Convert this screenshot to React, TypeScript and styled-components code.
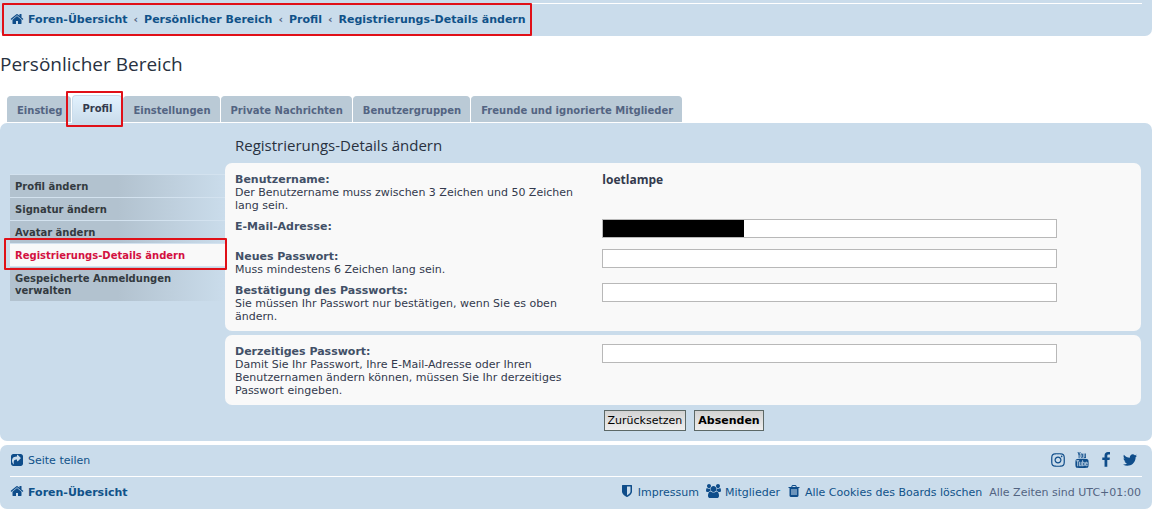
import React from 'react';
import styled, { createGlobalStyle } from 'styled-components';
import { TfiYoutube } from 'react-icons/tfi';

const GlobalStyle = createGlobalStyle`
  * { box-sizing: border-box; }
  body {
    margin: 0;
    background: #fff;
    color: #333a4d;
    font-family: "DejaVu Sans", Verdana, sans-serif;
    font-size: 11px;
    line-height: 13px;
  }
  ul { list-style: none; margin: 0; padding: 0; }
`;

const headingFont = '"Open Sans", sans-serif';

const Page = styled.div`
  margin-right: 5px;
`;

const Marker = styled.span<{ $inset: string }>`
  position: absolute;
  inset: ${(p) => p.$inset};
  border: 2px solid #e01018;
  border-radius: 1px;
  pointer-events: none;
  z-index: 2;
`;

const HeaderBar = styled.nav`
  height: 36px;
  padding: 3px 10px 0;
  background: #cadceb;
  border-radius: 0 0 7px 7px;
`;

const HeaderLine = styled.div`
  display: flex;
  align-items: center;
  height: 32px;
  border-top: 1px solid #fff;
`;

const Crumbs = styled.ol`
  position: relative;
  display: flex;
  align-items: center;
  margin: 0;
  padding: 0;
  list-style: none;
  font-weight: bold;
  color: #536482;
`;

const Crumb = styled.li`
  display: flex;
  align-items: center;
  & + &::before {
    content: "‹";
    padding: 0 6px;
  }
`;

const IconLink = styled.a<{ $bold?: boolean }>`
  display: inline-flex;
  align-items: center;
  gap: 4px;
  color: #105289;
  font-weight: ${(p) => (p.$bold ? 'bold' : 'normal')};
  text-decoration: none;
  white-space: nowrap;
`;

const Glyph = styled.svg`
  flex: none;
  display: block;
  margin-bottom: 2px;
  fill: #0f4d8a;
  fill-rule: evenodd;
`;

const PageTitle = styled.h1`
  margin: 16px 0 20px;
  font: 400 19px/24px ${headingFont};
  color: #28313f;
`;

const Tabs = styled.ul`
  display: flex;
  align-items: flex-end;
  gap: 1px;
  height: 27px;
  padding-left: 7px;
`;

const TabItem = styled.li<{ $active?: boolean }>`
  position: relative;
  height: ${(p) => (p.$active ? 28 : 27)}px;
  padding-bottom: ${(p) => (p.$active ? 0 : 1)}px;
`;

const TabLink = styled.a<{ $active?: boolean }>`
  display: flex;
  align-items: center;
  height: 100%;
  padding: ${(p) => (p.$active ? '0 9px 2px' : '1px 8px 0 9px')};
  border: 1px solid ${(p) => (p.$active ? '#cadceb' : '#bacad6')};
  border-bottom: 0;
  border-radius: 4px 4px 0 0;
  background: ${(p) => (p.$active ? 'linear-gradient(#e2f2fe, #cadceb)' : '#bacad6')};
  color: ${(p) => (p.$active ? '#333a4d' : '#536482')};
  font-size: 10px;
  font-weight: bold;
  text-decoration: none;
  white-space: nowrap;
`;

const Panel = styled.main`
  display: flex;
  padding: 10px 11px 10px 10px;
  background: #cadceb;
  border-radius: 7px;
`;

const Side = styled.nav`
  flex: none;
  width: 215px;
  padding-top: 41px;
`;

const SideItem = styled.li`
  position: relative;
`;

const SideLink = styled.a<{ $active?: boolean }>`
  display: block;
  margin-top: 1px;
  padding: 6px 5px 4px;
  background: ${(p) => (p.$active ? '#f9f9f9' : 'linear-gradient(to right, #b2c2cf 50%, #cadceb)')};
  box-shadow: 0 -1px 0 #d3e2ef;
  color: ${(p) => (p.$active ? '#d31141' : '#333a40')};
  font-size: 10px;
  font-weight: bold;
  line-height: 12px;
  text-decoration: none;
`;

const SettingsForm = styled.form`
  flex: 1;
  min-width: 0;
`;

const FormTitle = styled.h2`
  margin: 2px 10px 8px;
  font: 400 15px/20px ${headingFont};
  color: #28313f;
`;

const Card = styled.div`
  margin-bottom: 4px;
  padding: 5px 10px;
  background: #f9f9f9;
  border-radius: 7px;
`;

const Field = styled.div`
  display: grid;
  grid-template-columns: 40% 59%;
  column-gap: 1%;
  align-items: start;
  min-height: 30px;
  padding: 4px 0 3px;
`;

const FieldText = styled.div`
  padding-top: 1px;
`;

const Label = styled.label`
  display: block;
  color: #425067;
  font-weight: bold;
`;

const Control = styled.div`
  position: relative;
`;

const TextBox = styled.input`
  display: block;
  width: 86%;
  height: 19px;
  padding: 2px;
  border: 1px solid #b8b8b8;
  border-radius: 0;
  background: #fff;
  font: inherit;
`;

const Redaction = styled.span`
  position: absolute;
  top: 1px;
  left: 1px;
  width: 141px;
  height: 17px;
  background: #000;
`;

const UserName = styled.strong`
  display: block;
  color: #333a4d;
  font: 700 12px/13px "Open Sans", sans-serif;
`;

const Actions = styled.div`
  display: flex;
  gap: 8px;
  padding-left: calc(41% + 3px);
  padding-top: 1px;
`;

const Button = styled.button<{ $primary?: boolean }>`
  height: 21px;
  padding: 0 3px;
  border: 1px solid #5c6866;
  border-radius: 0;
  background: linear-gradient(#d2d2d2, #efefef);
  color: #000;
  font: inherit;
  font-weight: ${(p) => (p.$primary ? 'bold' : 'normal')};
`;

const Footer = styled.footer`
  margin-top: 4px;
  padding: 0 10px 2px;
  background: #cadceb;
  border-radius: 7px;
`;

const FooterRow = styled.div`
  display: flex;
  align-items: center;
  justify-content: space-between;
  height: 31px;
  & + & { border-top: 1px solid #fff; }
`;

const FooterLinks = styled.div<{ $gap: number; $end: number }>`
  display: flex;
  align-items: center;
  gap: ${(p) => p.$gap}px;
  padding-right: ${(p) => p.$end}px;
  color: #536482;
`;

const paths = {
  home: 'M1472 992v480q0 26-19 45t-45 19h-384v-384h-256v384h-384q-26 0-45-19t-19-45v-480q0-1 .5-3t.5-3l575-474 575 474q1 2 1 6zm223-69l-62 74q-8 9-21 11h-3q-13 0-21-7l-692-577-692 577q-12 8-24 7-13-2-21-11l-62-74q-8-10-7-23.5t11-21.5l719-599q32-26 76-26t76 26l244 204v-195q0-14 9-23t23-9h192q14 0 23 9t9 23v408l219 182q10 8 11 21.5t-7 23.5z',
  share: 'M1005 1045l352-352q19-19 19-45t-19-45l-352-352q-30-31-69-14-40 17-40 59v160q-119 0-216 19.5t-162.5 51-114 79-76.5 95.5-44.5 109-21.5 111.5-5 110.5q0 181 167 404 11 12 25 12 7 0 13-3 22-9 19-33-44-354 62-473 46-52 130-75.5t224-23.5v160q0 42 40 59 12 5 24 5 26 0 45-19zM1664 416v960q0 119-84.5 203.5t-203.5 84.5h-960q-119 0-203.5-84.5t-84.5-203.5v-960q0-119 84.5-203.5t203.5-84.5h960q119 0 203.5 84.5t84.5 203.5z',
  shield: 'M1344 960v-640h-448v1137q119-63 213-137 235-184 235-360zm192-768v768q0 86-33.5 170.5t-83 150-118 127.5-126.5 103-121 77.5-89.5 49.5-42.5 20q-12 6-26 6t-26-6q-16-7-42.5-20t-89.5-49.5-121-77.5-126.5-103-118-127.5-83-150-33.5-170.5v-768q0-26 19-45t45-19h1152q26 0 45 19t19 45z',
  users: 'M593 896q-162 5-265 128H194q-82 0-138-40.5T0 865q0-353 124-353 6 0 43.5 21t97.5 42.5T384 597q67 0 133-23-5 37-5 66 0 143 81 256zm1071 637q0 120-73 189.5t-194 69.5H523q-121 0-194-69.5T256 1533q0-53 3.5-103.5t14-109T300 1212t43-97.5 62-81 85.5-53.5T602 960q10 0 43 21.5t73 48 107 48 135 21.5 135-21.5 107-48 73-48 43-21.5q61 0 111.5 20t85.5 53.5 62 81 43 97.5 26.5 108.5 14 109 3.5 103.5zM640 256q0 106-75 181t-181 75-181-75-75-181 75-181T384 0t181 75 75 181zm704 384q0 159-112.5 271.5T960 1024 688.5 911.5 576 640t112.5-271.5T960 256t271.5 112.5T1344 640zm576 225q0 78-56 118.5t-138 40.5h-134q-103-123-265-128 81-113 81-256 0-29-5-66 66 23 133 23 59 0 119-21.5t97.5-42.5 43.5-21q124 0 124 353zm-128-609q0 106-75 181t-181 75-181-75-75-181 75-181 181-75 181 75 75 181z',
  trash: 'M704 1376v-704q0-14-9-23t-23-9h-64q-14 0-23 9t-9 23v704q0 14 9 23t23 9h64q14 0 23-9t9-23zm256 0v-704q0-14-9-23t-23-9h-64q-14 0-23 9t-9 23v704q0 14 9 23t23 9h64q14 0 23-9t9-23zm256 0v-704q0-14-9-23t-23-9h-64q-14 0-23 9t-9 23v704q0 14 9 23t23 9h64q14 0 23-9t9-23zm-544-992h448l-48-117q-7-9-17-11h-317q-10 2-17 11zm928 32v64q0 14-9 23t-23 9h-96v948q0 83-47 143.5t-113 60.5h-832q-66 0-113-58.5t-47-141.5v-952h-96q-14 0-23-9t-9-23v-64q0-14 9-23t23-9h309l70-167q15-37 54-63t79-26h320q40 0 79 26t54 63l70 167h309q14 0 23 9t9 23z',
  instagram: 'M1152 896q0-106-75-181t-181-75-181 75-75 181 75 181 181 75 181-75 75-181zm138 0q0 164-115 279t-279 115-279-115-115-279 115-279 279-115 279 115 115 279zm108-410q0 38-27 65t-65 27-65-27-27-65 27-65 65-27 65 27 27 65zm-502-220q-7 0-76.5-.5t-105.5 0-96.5 3-103 10-71.5 18.5q-50 20-88 58t-58 88q-11 29-18.5 71.5t-10 103-3 96.5 0 105.5.5 76.5-.5 76.5 0 105.5 3 96.5 10 103 18.5 71.5q20 50 58 88t88 58q29 11 71.5 18.5t103 10 96.5 3 105.5 0 76.5-.5 76.5.5 105.5 0 96.5-3 103-10 71.5-18.5q50-20 88-58t58-88q11-29 18.5-71.5t10-103 3-96.5 0-105.5-.5-76.5.5-76.5 0-105.5-3-96.5-10-103-18.5-71.5q-20-50-58-88t-88-58q-29-11-71.5-18.5t-103-10-96.5-3-105.5 0-76.5.5zm768 630q0 229-5 317-10 208-124 322t-322 124q-88 5-317 5t-317-5q-208-10-322-124t-124-322q-5-88-5-317t5-317q10-208 124-322t322-124q88-5 317-5t317 5q208 10 322 124t124 322q5 88 5 317z',
  facebook: 'M1343 12v264h-157q-86 0-116 36t-30 108v189h293l-39 296h-254v759h-306v-759h-255v-296h255v-218q0-186 104-288.5t277-102.5q147 0 228 12z',
  twitter: 'M1684 408q-67 98-162 167 1 14 1 42 0 130-38 259.5t-115.5 248.5-184.5 210.5-258 146-323 54.5q-271 0-496-145 35 4 78 4 225 0 401-138-105-2-188-64.5t-114-159.5q33 5 61 5 43 0 85-11-112-23-185.5-111.5t-73.5-205.5v-4q68 38 146 41-66-44-105-115t-39-154q0-88 44-163 121 149 294.5 238.5t371.5 99.5q-8-38-8-74 0-134 94.5-228.5t228.5-94.5q140 0 236 102 109-21 205-78-37 115-142 178 93-10 186-50z',
};

function Icon({ name, size = 14 }: { name: keyof typeof paths; size?: number }) {
  const box = name === 'users' ? '0 0 1920 1792' : '0 0 1792 1792';
  const width = name === 'users' ? size + 1 : size;
  return (
    <Glyph viewBox={box} width={width} height={size} aria-hidden="true">
      <path d={paths[name]} />
    </Glyph>
  );
}

const tabs = ['Einstieg', 'Profil', 'Einstellungen', 'Private Nachrichten', 'Benutzergruppen', 'Freunde und ignorierte Mitglieder'];

const sideLinks = [
  'Profil ändern',
  'Signatur ändern',
  'Avatar ändern',
  'Registrierungs-Details ändern',
  'Gespeicherte Anmeldungen verwalten',
];

function PasswordField({ id, label, hint }: { id: string; label: string; hint: string }) {
  return (
    <Field>
      <FieldText>
        <Label htmlFor={id}>{label}</Label>
        {hint}
      </FieldText>
      <Control>
        <TextBox id={id} type="password" />
      </Control>
    </Field>
  );
}

export default function App() {
  return (
    <Page>
      <GlobalStyle />
      <HeaderBar>
        <HeaderLine>
          <Crumbs>
            <Crumb>
              <IconLink href="#" $bold>
                <Icon name="home" />
                Foren-Übersicht
              </IconLink>
            </Crumb>
            {['Persönlicher Bereich', 'Profil', 'Registrierungs-Details ändern'].map((c) => (
              <Crumb key={c}>
                <IconLink href="#" $bold>{c}</IconLink>
              </Crumb>
            ))}
            <Marker $inset="-9px -6px -8px -8px" />
          </Crumbs>
        </HeaderLine>
      </HeaderBar>

      <PageTitle>Persönlicher Bereich</PageTitle>

      <Tabs>
        {tabs.map((t) => {
          const active = t === 'Profil';
          return (
            <TabItem key={t} $active={active}>
              <TabLink href="#" $active={active}>{t}</TabLink>
              {active && <Marker $inset="-4px -1px -4px -6px" />}
            </TabItem>
          );
        })}
      </Tabs>

      <Panel>
        <Side>
          <ul>
            {sideLinks.map((s) => {
              const active = s === 'Registrierungs-Details ändern';
              return (
                <SideItem key={s}>
                  <SideLink href="#" $active={active}>{s}</SideLink>
                  {active && <Marker $inset="-6px -2px -4px -6px" />}
                </SideItem>
              );
            })}
          </ul>
        </Side>

        <SettingsForm onSubmit={(e) => e.preventDefault()}>
          <FormTitle>Registrierungs-Details ändern</FormTitle>
          <Card>
            <Field>
              <FieldText>
                <Label as="span">Benutzername:</Label>
                Der Benutzername muss zwischen 3 Zeichen und 50 Zeichen lang sein.
              </FieldText>
              <FieldText>
                <UserName>loetlampe</UserName>
              </FieldText>
            </Field>
            <Field>
              <FieldText>
                <Label htmlFor="email">E-Mail-Adresse:</Label>
              </FieldText>
              <Control>
                <TextBox id="email" type="email" />
                <Redaction />
              </Control>
            </Field>
            <PasswordField id="new-password" label="Neues Passwort:" hint="Muss mindestens 6 Zeichen lang sein." />
            <PasswordField
              id="confirm-password"
              label="Bestätigung des Passworts:"
              hint="Sie müssen Ihr Passwort nur bestätigen, wenn Sie es oben ändern."
            />
          </Card>
          <Card>
            <PasswordField
              id="current-password"
              label="Derzeitiges Passwort:"
              hint="Damit Sie Ihr Passwort, Ihre E-Mail-Adresse oder Ihren Benutzernamen ändern können, müssen Sie Ihr derzeitiges Passwort eingeben."
            />
          </Card>
          <Actions>
            <Button type="reset">Zurücksetzen</Button>
            <Button type="submit" $primary>Absenden</Button>
          </Actions>
        </SettingsForm>
      </Panel>

      <Footer>
        <FooterRow>
          <IconLink href="#">
            <Icon name="share" />
            Seite teilen
          </IconLink>
          <FooterLinks $gap={8} $end={4}>
            <IconLink href="#" aria-label="Instagram"><Icon name="instagram" size={16} /></IconLink>
            <IconLink href="#" aria-label="YouTube"><Glyph as={TfiYoutube} size={16} /></IconLink>
            <IconLink href="#" aria-label="Facebook"><Icon name="facebook" size={16} /></IconLink>
            <IconLink href="#" aria-label="Twitter"><Icon name="twitter" size={16} /></IconLink>
          </FooterLinks>
        </FooterRow>
        <FooterRow>
          <IconLink href="#" $bold>
            <Icon name="home" />
            Foren-Übersicht
          </IconLink>
          <FooterLinks $gap={7} $end={1}>
            <IconLink href="#"><Icon name="shield" />Impressum</IconLink>
            <IconLink href="#"><Icon name="users" />Mitglieder</IconLink>
            <IconLink href="#"><Icon name="trash" />Alle Cookies des Boards löschen</IconLink>
            <span>Alle Zeiten sind UTC+01:00</span>
          </FooterLinks>
        </FooterRow>
      </Footer>
    </Page>
  );
}
